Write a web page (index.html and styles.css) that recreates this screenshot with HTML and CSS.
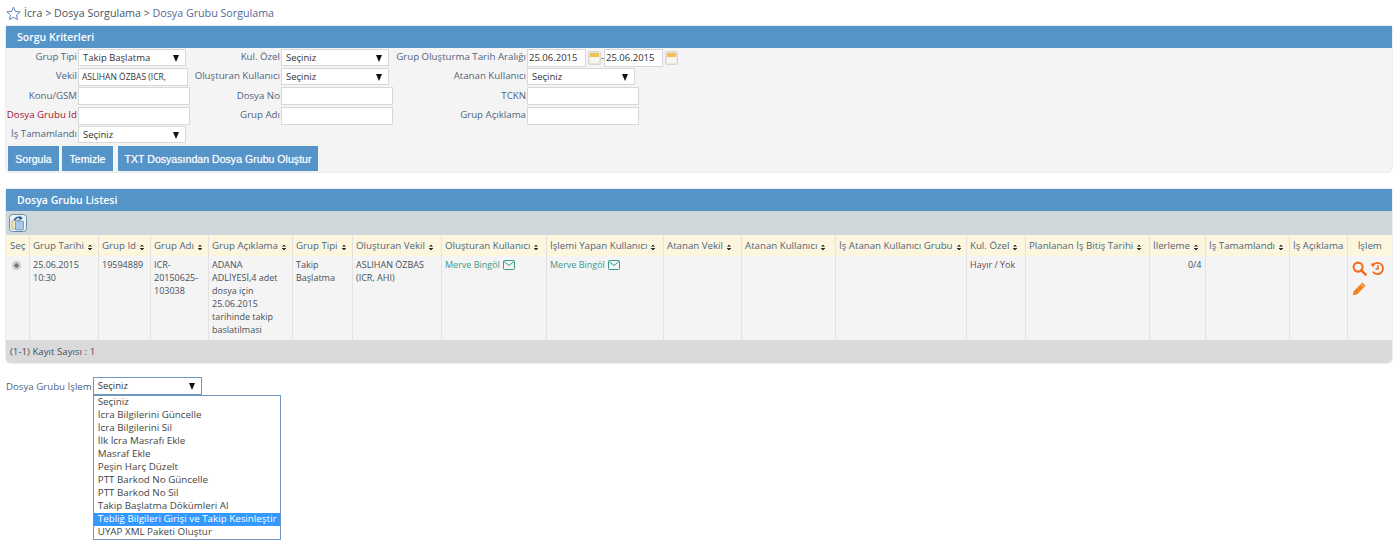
FILE: index.html
```html
<!DOCTYPE html>
<html lang="tr">
<head>
  <meta charset="UTF-8" />
  <title>Dosya Grubu Sorgulama</title>
  <link rel="stylesheet" href="styles.css">
</head>
<body>
  <div class="breadcrumb">
    <svg class="star" viewBox="0 0 16 16"><path d="M8 1.2l2 4.6 5 .5-3.8 3.3 1.1 4.9L8 12l-4.3 2.5 1.1-4.9L1 6.300l5-.5z"/></svg>
    <span>İcra &gt; Dosya Sorgulama &gt; <span class="current">Dosya Grubu Sorgulama</span></span>
  </div>

  <div class="panel">
    <div class="panel-title">Sorgu Kriterleri</div>
    <div class="panel-body">
      <div class="form-grid">
        <label>Grup Tipi</label>
        <div class="select">Takip Başlatma<i></i></div>
        <label>Kul. Özel</label>
        <div class="select">Seçiniz<i></i></div>
        <label>Grup Oluşturma Tarih Aralığı</label>
        <div class="dates">
          <input type="text" class="date" value="25.06.2015" />
          <svg class="cal" viewBox="0 0 13 14"><rect x=".5" y=".5" width="12" height="13" rx="1" fill="#e6e6e0" stroke="#d8d8d2"/><rect x="2" y="2" width="9" height="4" fill="#f3c052"/><rect x="2" y="6" width="9" height="6" fill="#f7f7f2"/></svg>
          <span class="dash">-</span>
          <input type="text" class="date" value="25.06.2015" />
          <svg class="cal" viewBox="0 0 13 14"><rect x=".5" y=".5" width="12" height="13" rx="1" fill="#e6e6e0" stroke="#d8d8d2"/><rect x="2" y="2" width="9" height="4" fill="#f3c052"/><rect x="2" y="6" width="9" height="6" fill="#f7f7f2"/></svg>
        </div>

        <label>Vekil</label>
        <input type="text" class="field small-text" value="ASLIHAN ÖZBAS (ICR," />
        <label>Oluşturan Kullanıcı</label>
        <div class="select">Seçiniz<i></i></div>
        <label>Atanan Kullanıcı</label>
        <div class="select">Seçiniz<i></i></div>

        <label>Konu/GSM</label>
        <input type="text" class="field" />
        <label>Dosya No</label>
        <input type="text" class="field" />
        <label>TCKN</label>
        <input type="text" class="field" />

        <label class="required">Dosya Grubu Id</label>
        <input type="text" class="field" />
        <label>Grup Adı</label>
        <input type="text" class="field" />
        <label>Grup Açıklama</label>
        <input type="text" class="field" />

        <label>İş Tamamlandı</label>
        <div class="select">Seçiniz<i></i></div>
      </div>
      <div class="buttons">
        <button class="btn-sorgula">Sorgula</button>
        <button class="btn-temizle">Temizle</button>
        <button class="btn-txt">TXT Dosyasından Dosya Grubu Oluştur</button>
      </div>
    </div>
  </div>

  <div class="panel list-panel">
    <div class="panel-title">Dosya Grubu Listesi</div>
    <div class="toolbar">
      <span class="export">
        <svg viewBox="0 0 18 18"><rect x=".5" y=".5" width="17" height="17" rx="3" fill="#eef3f7" stroke="#6d8ba3"/><rect x="3" y="6" width="8" height="9" rx="1" fill="#f2e8b8" stroke="#9a9a80" stroke-width=".7"/><rect x="6.500" y="7" width="8" height="9" rx="1" fill="#a9c9ea" stroke="#5a86b3" stroke-width=".7"/><path d="M5.500 6.500C6 3.800 9 2.600 11.500 3.600" fill="none" stroke="#1f5c9c" stroke-width="1.500"/><path d="M10.500 1.800l3.500 2.500-3.600 2z" fill="#1f5c9c"/></svg>
      </span>
    </div>
    <table class="list">
      <colgroup>
        <col class="w-sec"><col class="w-tarih"><col class="w-id"><col class="w-adi"><col class="w-aciklama"><col class="w-tipi"><col class="w-vekil"><col class="w-olusturan"><col class="w-islemi"><col class="w-atvekil"><col class="w-atkul"><col class="w-isgrup"><col class="w-ozel"><col class="w-plan"><col class="w-ilerleme"><col class="w-tamam"><col class="w-isack"><col class="w-islem">
      </colgroup>
      <thead>
        <tr>
          <th>Seç</th>
          <th>Grup Tarihi<b class="sort"></b></th>
          <th>Grup Id<b class="sort"></b></th>
          <th>Grup Adı<b class="sort"></b></th>
          <th>Grup Açıklama<b class="sort"></b></th>
          <th>Grup Tipi<b class="sort"></b></th>
          <th>Oluşturan Vekil<b class="sort"></b></th>
          <th>Oluşturan Kullanıcı<b class="sort"></b></th>
          <th>İşlemi Yapan Kullanıcı<b class="sort"></b></th>
          <th>Atanan Vekil<b class="sort"></b></th>
          <th>Atanan Kullanıcı<b class="sort"></b></th>
          <th>İş Atanan Kullanıcı Grubu<b class="sort"></b></th>
          <th>Kul. Özel<b class="sort"></b></th>
          <th>Planlanan İş Bitiş Tarihi<b class="sort"></b></th>
          <th>İlerleme<b class="sort"></b></th>
          <th>İş Tamamlandı<b class="sort"></b></th>
          <th>İş Açıklama</th>
          <th class="center">İşlem</th>
        </tr>
      </thead>
      <tbody>
        <tr>
          <td class="pick"><span class="radio"></span></td>
          <td>25.06.2015 10:30</td>
          <td>19594889</td>
          <td>ICR-20150625-103038</td>
          <td>ADANA ADLİYESİ,4 adet dosya için 25.06.2015 tarihinde takip baslatilmasi</td>
          <td>Takip Başlatma</td>
          <td>ASLIHAN ÖZBAS (ICR, AHI)</td>
          <td class="user">Merve Bingöl <svg class="mail" viewBox="0 0 12 10"><rect x=".5" y=".5" width="11" height="9" rx="1"/><path d="M1 1.500l5 4 5-4"/></svg></td>
          <td class="user">Merve Bingöl <svg class="mail" viewBox="0 0 12 10"><rect x=".5" y=".5" width="11" height="9" rx="1"/><path d="M1 1.500l5 4 5-4"/></svg></td>
          <td></td>
          <td></td>
          <td></td>
          <td class="ozel">Hayır / Yok</td>
          <td></td>
          <td class="right">0/4</td>
          <td></td>
          <td></td>
          <td class="actions">
            <svg viewBox="0 0 16 16"><circle cx="6.500" cy="6.500" r="4.800" fill="none" stroke="#f26a1b" stroke-width="2.200"/><path d="M10 10l4.500 4.500" stroke="#f26a1b" stroke-width="2.600" stroke-linecap="round"/></svg>
            <svg viewBox="0 0 16 16"><path d="M3.200 4.200A6 6 0 1 1 3 11.500" fill="none" stroke="#f26a1b" stroke-width="2"/><path d="M.6 2.600h5.200l-2.600 4.200z" fill="#f26a1b"/><path d="M8.500 4.500v4H5.800" fill="none" stroke="#f26a1b" stroke-width="1.700"/></svg>
            <svg class="pencil" viewBox="0 0 16 16"><path d="M11 1.500l3.500 3.500L5.200 14.300.8 15.300l1-4.400z" fill="#f58220"/><path d="M9.600 3l3.500 3.500" stroke="#f4f4f4" stroke-width=".8"/></svg>
          </td>
        </tr>
      </tbody>
    </table>
    <div class="list-footer">(1-1) Kayıt Sayısı : 1</div>
  </div>

  <div class="operation">
    <label>Dosya Grubu İşlem</label>
    <div class="op-wrap">
      <div class="select op-select">Seçiniz<i></i></div>
      <ul class="op-menu">
        <li>Seçiniz</li>
        <li>İcra Bilgilerini Güncelle</li>
        <li>İcra Bilgilerini Sil</li>
        <li>İlk İcra Masrafı Ekle</li>
        <li>Masraf Ekle</li>
        <li>Peşin Harç Düzelt</li>
        <li>PTT Barkod No Güncelle</li>
        <li>PTT Barkod No Sil</li>
        <li>Takip Başlatma Dökümleri Al</li>
        <li class="active">Tebliğ Bilgileri Girişi ve Takip Kesinleştir</li>
        <li>UYAP XML Paketi Oluştur</li>
      </ul>
    </div>
  </div>
</body>
</html>
```

FILE: styles.css
```css
html, body {
  margin: 0;
  padding: 0;
  background-color: #fff;
}
body {
  font-family: "Open Sans", "Noto Sans", sans-serif;
  font-size: 9.7px;
  color: #444;
  height: 541px;
  overflow: hidden;
}
.breadcrumb {
  display: flex;
  align-items: center;
  gap: 3px;
  height: 26px;
  padding-left: 6px;
  box-sizing: border-box;
  font-size: 10.7px;
  color: #4a5560;
}
.breadcrumb .current {
  color: #54689a;
}
.star {
  width: 15px;
  height: 15px;
  fill: #fff;
  stroke: #5a79b5;
  stroke-width: 1;
}
.panel {
  margin: 0 3px 0 6px;
  background-color: #f4f4f4;
  border-radius: 0 0 5px 5px;
  box-shadow: 0 0 2px rgba(0,0,0,0.25);
}
.panel-title {
  height: 22px;
  line-height: 22px;
  padding-left: 11px;
  background-color: #5594c9;
  color: #fff;
  font-size: 10.5px;
  font-weight: 600;
}
.panel-body {
  height: 124px;
}
.form-grid {
  display: grid;
  grid-template-columns: 71px 124px 77px 114px 130px auto;
  grid-template-rows: 19px 19px 20px 19px 19px;
  column-gap: 1px;
  align-items: center;
}
.form-grid label {
  padding-bottom: 2px;
  text-align: right;
  white-space: nowrap;
  color: #4f6480;
  justify-self: end;
}
.form-grid label.required {
  color: #a3123c;
}
.select {
  position: relative;
  width: 108px;
  height: 17px;
  line-height: 16px;
  padding-left: 4px;
  box-sizing: border-box;
  background-color: #fff;
  border: 1px solid #d8d8d8;
  color: #333;
  font-size: 9.5px;
}
.select i {
  position: absolute;
  right: 6px;
  top: 5px;
  border-left: 3.5px solid transparent;
  border-right: 3.5px solid transparent;
  border-top: 7px solid #111;
}
.field {
  width: 112px;
  height: 18px;
  padding: 0 3px;
  box-sizing: border-box;
  background-color: #fff;
  border: 1px solid #d8d8d8;
  outline: none;
  font-family: inherit;
  font-size: 9.5px;
  color: #333;
}
.small-text {
  font-size: 8.5px;
  width: 110px;
}
.dates {
  display: flex;
  align-items: center;
  width: 300px;
}
.date {
  width: 59px;
  height: 18px;
  padding: 0;
  padding-left: 1px;
  box-sizing: border-box;
  background-color: #fff;
  border: 1px solid #d8d8d8;
  outline: none;
  font-family: inherit;
  font-size: 9.5px;
  color: #333;
}
.cal {
  width: 13px;
  height: 14px;
  margin-left: 2px;
}
.dash {
  width: 3px;
}
.buttons {
  display: flex;
  padding: 2px 0 0 2px;
}
.buttons button {
  height: 25px;
  border: none;
  padding: 0;
  background-color: #5594c9;
  color: #fff;
  font-family: "Liberation Sans", Arial, sans-serif;
  font-size: 10.6px;
  white-space: nowrap;
  text-shadow: 0 0 1px rgba(255,255,255,0.6);
}
.btn-sorgula {
  width: 51px;
  margin-right: 3px;
}
.btn-temizle {
  width: 51px;
  margin-right: 5px;
}
.btn-txt {
  width: 200px;
}
.list-panel {
  margin-top: 17px;
}
.toolbar {
  height: 24px;
  background-color: #cfd7da;
  display: flex;
  align-items: center;
  padding-left: 3px;
}
.export svg {
  display: block;
  width: 18px;
  height: 18px;
}
.list {
  width: 1386px;
  table-layout: fixed;
  border-collapse: collapse;
}
.w-sec { width: 23px; }
.w-tarih { width: 69px; }
.w-id { width: 52px; }
.w-adi { width: 58px; }
.w-aciklama { width: 84px; }
.w-tipi { width: 60px; }
.w-vekil { width: 89px; }
.w-olusturan { width: 105px; }
.w-islemi { width: 117px; }
.w-atvekil { width: 78px; }
.w-atkul { width: 94px; }
.w-isgrup { width: 131px; }
.w-ozel { width: 59px; }
.w-plan { width: 124px; }
.w-ilerleme { width: 56px; }
.w-tamam { width: 84px; }
.w-isack { width: 58px; }
.w-islem { width: 45px; }
.list th {
  height: 21px;
  padding: 0 0 0 3.5px;
  background-color: #fdf6de;
  border-left: 1px solid #e2e2e2;
  color: #4f6480;
  font-weight: 400;
  text-align: left;
  white-space: nowrap;
  overflow: hidden;
}
.list th:first-child,
.list td:first-child {
  border-left: none;
}
.list th:first-child {
  padding-left: 4px;
}
.list th.center {
  text-align: center;
  padding: 0;
}
.list td {
  height: 84px;
  padding: 2px 3px 0 3.5px;
  box-sizing: border-box;
  vertical-align: top;
  border-left: 1px solid #e2e2e2;
  font-size: 9px;
  line-height: 13px;
  color: #47505a;
}
.list td.pick {
  padding: 3px 0 0 6px;
}
.list td.right {
  text-align: right;
}
.list td.user {
  color: #3a9a8c;
  white-space: nowrap;
}
.list td.ozel {
  color: #6a4a55;
}
.sort {
  display: inline-block;
  width: 4px;
  height: 6px;
  margin-left: 4px;
  vertical-align: -1px;
  background:
    linear-gradient(to bottom right, transparent 50%, #333 50%) left top / 2px 2.5px no-repeat,
    linear-gradient(to bottom left, transparent 50%, #333 50%) right top / 2px 2.5px no-repeat,
    linear-gradient(to top right, transparent 50%, #333 50%) left bottom / 2px 2.5px no-repeat,
    linear-gradient(to top left, transparent 50%, #333 50%) right bottom / 2px 2.5px no-repeat;
}
.radio {
  display: inline-block;
  width: 7px;
  height: 7px;
  border-radius: 50%;
  margin-top: 2px;
  background: radial-gradient(circle, #777 0 2px, #e4e4e4 2.5px);
  border: 1px solid #bbb;
}
.mail {
  width: 12px;
  height: 10px;
  margin-left: 1px;
  vertical-align: -2px;
  fill: none;
  stroke: #3a9a8c;
  stroke-width: 1;
}
.actions svg {
  width: 15px;
  height: 15px;
  margin-right: 1px;
}
.list td.actions {
  line-height: 17px;
  padding: 5px 0 0 4px;
}
.list-footer {
  height: 23px;
  line-height: 23px;
  padding-left: 4px;
  background-color: #dadada;
  border-radius: 0 0 5px 5px;
  color: #47505a;
}
.operation {
  display: flex;
  align-items: center;
  margin: 14px 0 0 6px;
  gap: 1px;
  color: #4f6480;
}
.op-wrap {
  position: relative;
}
.op-select {
  width: 109px;
  height: 18px;
  border-color: #6f95c4;
}
.op-menu {
  position: absolute;
  left: 0;
  top: 18px;
  width: 188px;
  margin: 0;
  padding: 0;
  box-sizing: border-box;
  list-style: none;
  background-color: #fff;
  border: 1px solid #6f95c4;
  color: #444;
  font-size: 9.8px;
}
.op-menu li {
  height: 13px;
  line-height: 12px;
  padding-left: 4px;
  white-space: nowrap;
}
.op-menu li.active {
  background-color: #3399ff;
  color: #fff;
}
```
